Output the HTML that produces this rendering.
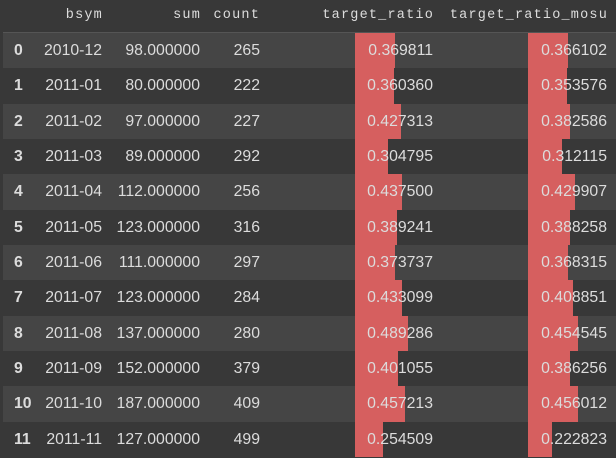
<!DOCTYPE html>
<html><head><meta charset="utf-8"><style>
body{margin:0;width:616px;height:457px;background:#383838;overflow:hidden;position:relative;font-family:"Liberation Sans",sans-serif;color:#dcdcdc}
.h{position:absolute;top:8px;font-family:"Liberation Mono",monospace;font-size:13.5px;letter-spacing:1.2px;color:#ddd}
.line{position:absolute;left:3px;right:0;top:32px;height:1px;background:#555}
.r{position:absolute;left:3px;right:0;height:35.33px}
.r.e{background:#454545}
.c{position:absolute;top:0;height:35.33px;line-height:36px;font-size:15.8px}
.b{position:absolute;top:0;height:35.33px;background:#d65f5f}
.i{font-weight:bold;left:11px}
</style></head><body>
<div class="h" style="right:513px">bsym</div>
<div class="h" style="right:415px">sum</div>
<div class="h" style="right:356px">count</div>
<div class="h" style="right:182px">target_ratio</div>
<div class="h" style="right:8px">target_ratio_mosu</div>
<div class="line"></div>
<div id="t"></div>
<script>
var d=[["2010-12","98.000000",265,0.369811,0.366102],["2011-01","80.000000",222,0.360360,0.353576],["2011-02","97.000000",227,0.427313,0.382586],["2011-03","89.000000",292,0.304795,0.312115],["2011-04","112.000000",256,0.437500,0.429907],["2011-05","123.000000",316,0.389241,0.388258],["2011-06","111.000000",297,0.373737,0.368315],["2011-07","123.000000",284,0.433099,0.408851],["2011-08","137.000000",280,0.489286,0.454545],["2011-09","152.000000",379,0.401055,0.386256],["2011-10","187.000000",409,0.457213,0.456012],["2011-11","127.000000",499,0.254509,0.222823]];
var h="";
d.forEach(function(r,k){
h+='<div class="r'+(k%2==0?' e':'')+'" style="top:'+(33+35.33*k)+'px">'+
'<div class="b" style="left:352px;width:'+(108.2*r[3]).toFixed(1)+'px"></div>'+
'<div class="b" style="left:525px;width:'+(109.3*r[4]).toFixed(1)+'px"></div>'+
'<div class="c i">'+k+'</div>'+
'<div class="c" style="right:514px">'+r[0]+'</div>'+
'<div class="c" style="right:416px">'+r[1]+'</div>'+
'<div class="c" style="right:356px">'+r[2]+'</div>'+
'<div class="c" style="right:183px">'+r[3].toFixed(6)+'</div>'+
'<div class="c" style="right:9px">'+r[4].toFixed(6)+'</div></div>';
});
document.getElementById("t").innerHTML=h;
</script>
</body></html>
